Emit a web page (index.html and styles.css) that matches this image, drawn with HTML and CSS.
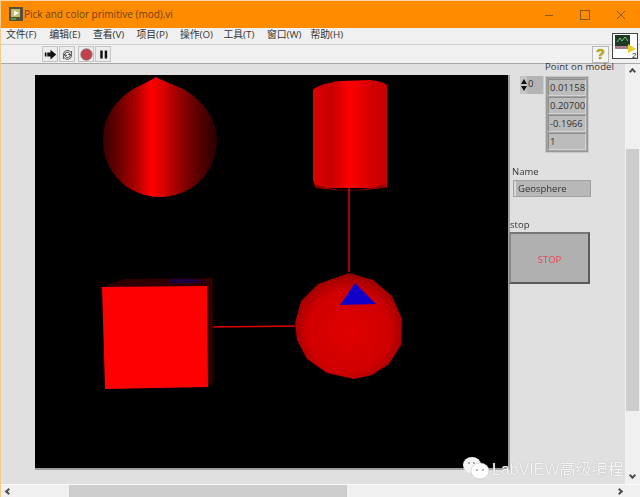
FILE: index.html
```html
<!DOCTYPE html>
<html lang="zh">
<head>
<meta charset="utf-8">
<title>Pick and color primitive (mod).vi</title>
<link rel="stylesheet" href="styles.css">
</head>
<body>
<div class="window">
  <header class="titlebar">
    <svg class="appicon" viewBox="0 0 14 14"><rect width="14" height="14" fill="#55503a"/><rect x="2" y="2" width="9" height="8" fill="#c8b860"/><path d="M5 3.500l5 2.500-5 3z" fill="#fff"/><rect x="2" y="11" width="5" height="2" fill="#4a9a4a"/></svg>
    <span class="title">Pick and color primitive (mod).vi</span>
    <div class="winbtns">
      <svg viewBox="0 0 36 28"><path d="M14 14.500h8" stroke="#8a5a10" fill="none"/></svg>
      <svg viewBox="0 0 36 28"><rect x="13.500" y="9.500" width="9" height="9" stroke="#8a5a10" fill="none"/></svg>
      <svg viewBox="0 0 36 28"><path d="M14 10l8 8M22 10l-8 8" stroke="#8a5a10" fill="none"/></svg>
    </div>
  </header>
  <nav class="menubar">
    <span>文件(F)</span><span>编辑(E)</span><span>查看(V)</span><span>项目(P)</span><span>操作(O)</span><span>工具(T)</span><span>窗口(W)</span><span>帮助(H)</span>
  </nav>
  <div class="toolbar">
    <div class="tools">
      <span class="tool"><svg viewBox="0 0 16 16"><path d="M1 5.500h2v5H1zM4 5.500h4V2l7 6-7 6v-3.500H4z" fill="#111"/></svg></span>
      <span class="tool"><svg viewBox="0 0 16 16"><path d="M3 8a5 5 0 0 1 9-3l1-1v4H9l1.500-1.500A3 3 0 0 0 5 8zM13 9a5 5 0 0 1-9 3l-1 1V9h4l-1.500 1.500A3 3 0 0 0 11 9z" fill="none" stroke="#333"/></svg></span>
      <span class="tool gap"><svg viewBox="0 0 16 16"><circle cx="8" cy="8" r="7" fill="#c4404a" stroke="#777"/></svg></span>
      <span class="tool"><svg viewBox="0 0 16 16"><path d="M4 3h3v10H4zM9.500 3h3v10h-3z" fill="#111"/></svg></span>
    </div>
    <span class="help">?</span>
  </div>
  <svg class="connector" viewBox="0 0 26 26">
    <rect x=".5" y=".5" width="25" height="25" fill="#fff" stroke="#444"/>
    <rect x="3" y="2" width="15" height="11" fill="#1c3a24"/>
    <path d="M5 9l3-4 2 3 3-4 3 4" stroke="#6fd06f" fill="none"/>
    <rect x="3" y="13" width="15" height="3" fill="#a87c8c"/>
    <path d="M16 11l8 5-8 4z" fill="#e8cf2c"/>
    <text x="20" y="25" class="conn-num">2</text>
  </svg>
  <div class="workarea">
    <main class="panel">
      <svg class="scene" viewBox="35 75 473 393">
        <defs>
          <linearGradient id="sph" x1="0" x2="1" y1="0" y2="0">
            <stop offset="0" stop-color="#3a0000"/><stop offset=".15" stop-color="#700000"/><stop offset=".3" stop-color="#b00000"/><stop offset=".42" stop-color="#ff0000"/><stop offset=".5" stop-color="#e80000"/><stop offset=".65" stop-color="#a00000"/><stop offset=".82" stop-color="#600000"/><stop offset="1" stop-color="#280000"/>
          </linearGradient>
          <linearGradient id="cyl" x1="0" x2="1" y1="0" y2="0">
            <stop offset="0" stop-color="#d80000"/><stop offset=".25" stop-color="#c80000"/><stop offset=".5" stop-color="#ff0000"/><stop offset=".8" stop-color="#d00000"/><stop offset="1" stop-color="#c80000"/>
          </linearGradient>
          <radialGradient id="geo" cx=".5" cy=".55" r=".55">
            <stop offset="0" stop-color="#e00000"/><stop offset=".7" stop-color="#d00000"/><stop offset="1" stop-color="#980000"/>
          </radialGradient>
        </defs>
        <rect x="35" y="75" width="473" height="393" fill="#000"/>
        <path d="M156 77C163 81 175 85 185 90C205 103 217 120 217 140C217 172 192 197 160 197C128 197 103 172 103 140C103 118 115 100 135 88C143 84 150 81 156 77Z" fill="url(#sph)"/>
        <path d="M313 180V90Q318 84 340 81L370 80Q382 81 387 85V187L384 188H316Z" fill="url(#cyl)"/>
        <path d="M313 184Q350 196 386 184L384 188Q350 193 316 188Z" fill="#8a0000"/>
        <path d="M349 188V272" stroke="#e00000" stroke-width="1.500"/>
        <path d="M208 327L295 326" stroke="#e00000" stroke-width="1.500"/>
        <path d="M102 287L125 279L213 278L214 381L208 387Z" fill="#300000"/>
        <path d="M170 279L198 279L202 283H170Z" fill="#1c0040"/>
        <path d="M102 287L207 286L208 387L105 389Z" fill="#ff0000"/>
        <path d="M349 273L373 280L392 296L402 319L401 345L389 364L372 375L354 379L327 373L307 359L297 340L295 323L301 301L318 284Z" fill="url(#geo)"/>
        <path d="M355 283L376 304L340 305Z" fill="#1200c8"/>
      </svg>
      <div class="controls">
        <div class="point-title">Point on model</div>
        <div class="point-row">
          <div class="index"><span class="spin"><i class="up"></i><i class="down"></i></span><span class="index-val">0</span></div>
          <div class="array">
            <span class="cell">0.01158</span>
            <span class="cell">0.20700</span>
            <span class="cell">-0.1966</span>
            <span class="cell">1</span>
          </div>
        </div>
        <div class="name-label">Name</div>
        <div class="name-box">Geosphere</div>
        <div class="stop-label">stop</div>
        <button class="stop">STOP</button>
      </div>
    </main>
    <aside class="vscroll">
      <i class="arrow-up"></i>
      <div class="vthumb"></div>
      <i class="arrow-down"></i>
    </aside>
  </div>
  <footer class="hscroll">
    <i class="arrow-left"></i>
    <div class="htrack"><div class="hthumb"></div></div>
    <i class="arrow-right"></i>
  </footer>
  <div class="watermark">
    <svg viewBox="0 0 28 24"><ellipse cx="10" cy="9" rx="9" ry="8" fill="#f4f4f4"/><ellipse cx="18" cy="15" rx="9" ry="8" fill="#fff" stroke="#bbb" stroke-width=".5"/><circle cx="7" cy="7" r="1" fill="#999"/><circle cx="12" cy="7" r="1" fill="#999"/><circle cx="15" cy="14" r="1" fill="#999"/><circle cx="21" cy="14" r="1" fill="#999"/></svg>
    <span>LabVIEW高级编程</span>
  </div>
</div>
</body>
</html>
```
FILE: styles.css
```css
* { box-sizing: border-box; }
html, body { margin: 0; padding: 0; }
body { width: 640px; height: 497px; overflow: hidden; background: #e0e0e0; font-family: "Open Sans", "Noto Sans CJK SC", sans-serif; }
.window { position: relative; width: 640px; height: 497px; display: flex; flex-direction: column; border-left: 1px solid #f6c98c; border-top: 1px solid #f7d9ae; filter: blur(.35px); }
.titlebar { height: 27px; background: #ff8c00; display: flex; align-items: center; padding-left: 8px; }
.appicon { width: 14px; height: 14px; flex: none; margin-right: 1px; margin-top: -2px; }
.title { font-size: 10px; color: #6a3f08; margin-top: -2px; }
.winbtns { margin-left: auto; display: flex; height: 27px; margin-top: -1px; margin-right: 1px; }
.winbtns svg { width: 36px; height: 28px; }
.menubar { height: 16px; background: #f0f0f0; display: flex; font-size: 9.800px; color: #333; padding-left: 5px; gap: 10.500px; line-height: 14px; white-space: nowrap; }
.menubar span { width: 33px; }
.toolbar { height: 20px; background: #f0f0f0; border-top: 1px solid #d0d0d0; border-bottom: 1px solid #a8a8a8; display: flex; align-items: center; padding-left: 41px; padding-right: 30px; }
.tools { display: flex; gap: 1px; }
.tool { width: 16px; height: 16px; background: #ececec; border: 1px solid #c4c4c4; display: flex; align-items: center; justify-content: center; }
.tool svg { width: 13px; height: 13px; }
.tool.gap { margin-left: 2px; }
.help { margin-left: auto; margin-right: 1px; width: 17px; height: 17px; border: 1px solid #b8b8b8; background: #f4f4f4; color: #c4b000; font: bold 14px/15px "Liberation Sans", sans-serif; text-align: center; text-shadow: 0 0 1px #554; }
.connector { position: absolute; left: 611px; top: 32px; width: 26px; height: 26px; }
.conn-num { font: 8px "Liberation Sans", sans-serif; fill: #223; }
.workarea { flex: 1; display: flex; min-height: 0; }
.panel { flex: 1; display: flex; background: #e0e0e0; padding: 11px 0 0 34px; align-items: flex-start; }
.scene { width: 473px; height: 393px; flex: none; display: block; box-shadow: 1px 1px 0 1px #a0a0a0; }
.controls { width: 100px; flex: none; padding-left: 4px; font-size: 9.500px; color: #333; margin-top: -14px; }
.point-title { margin-left: 33px; height: 15px; line-height: 12px; white-space: nowrap; letter-spacing: .1px; }
.point-row { display: flex; align-items: flex-start; margin-left: 8px; }
.index { display: flex; width: 24px; height: 18px; }
.spin { width: 7px; height: 18px; background: #c4c4c4; display: flex; flex-direction: column; align-items: center; justify-content: center; gap: 2px; }
.spin i { width: 0; height: 0; border-left: 3px solid transparent; border-right: 3px solid transparent; }
.spin .up { border-bottom: 5px solid #111; }
.spin .down { border-top: 5px solid #111; }
.index-val { flex: 1; background: #b4b4b4; padding-left: 1px; line-height: 15px; border-right: 1px solid #ccc; }
.array { margin-left: 1px; width: 44px; height: 77px; background: #a4a4a4; border: 2px solid #989898; padding: 1px 1px; display: flex; flex-direction: column; gap: 1px; overflow: hidden; outline: 1px solid #c8c8c8; outline-offset: -1px; }
.cell { height: 17px; flex: none; background: #bcbcbc; border: 1px solid #8c8c8c; border-right-color: #d4d4d4; border-bottom-color: #d4d4d4; overflow: hidden; white-space: nowrap; padding-left: 1px; line-height: 15px; }
.name-label { margin-top: 13px; margin-left: 0; height: 13px; line-height: 12px; }
.name-box { width: 78px; height: 17px; margin-left: 1px; margin-top: 1px; background: #b8b8b8; border: 1px solid #8c8c8c; border-left: 3px solid #d8d8d8; outline: 1px solid #a0a0a0; outline-offset: -1px; padding-left: 2px; line-height: 15px; }
.stop-label { margin-top: 22px; margin-left: -2px; height: 13px; line-height: 12px; }
.stop { display: block; margin: 0 0 0 -3px; width: 81px; height: 52px; background: #b0b0b0; border: 2px solid #5a5a5a; border-top-color: #777; border-left-color: #888; color: #f04050; font: 9.500px "Open Sans", sans-serif; padding: 2px 0 0; }
.vscroll { width: 15px; background: #f0f0f0; position: relative; display: flex; flex-direction: column; align-items: center; flex: none; }
.vthumb { position: absolute; top: 85px; left: 1px; width: 13px; height: 262px; background: #cdcdcd; }
.arrow-up, .arrow-down, .arrow-left, .arrow-right { display: block; width: 5px; height: 5px; border: solid #505050; border-width: 2px 0 0 2px; }
.arrow-up { transform: rotate(45deg); margin-top: 5px; }
.arrow-down { transform: rotate(225deg); margin-top: auto; margin-bottom: 6px; }
.hscroll { height: 13px; background: #f0f0f0; border-top: 1px solid #fafafa; display: flex; align-items: center; padding: 0 18px 0 5px; flex: none; }
.arrow-left { transform: rotate(-45deg); }
.arrow-right { transform: rotate(135deg); }
.htrack { flex: 1; height: 12px; padding-left: 58px; }
.hthumb { width: 278px; height: 12px; background: #cdcdcd; }
.watermark { position: absolute; left: 461px; top: 455px; display: flex; align-items: center; gap: 2px; color: #f6f6f6; font: 16px "Liberation Sans", "Noto Sans CJK SC", sans-serif; text-shadow: 0 0 1px #999; white-space: nowrap; }
.watermark svg { width: 28px; height: 24px; flex: none; }
```
